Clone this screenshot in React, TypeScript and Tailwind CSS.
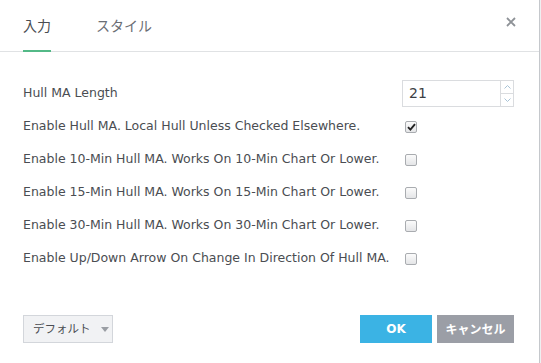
import React, { useState } from 'react';

const ROWS = [
  { label: 'Enable Hull MA. Local Hull Unless Checked Elsewhere.', checked: true },
  { label: 'Enable 10-Min Hull MA. Works On 10-Min Chart Or Lower.', checked: false },
  { label: 'Enable 15-Min Hull MA. Works On 15-Min Chart Or Lower.', checked: false },
  { label: 'Enable 30-Min Hull MA. Works On 30-Min Chart Or Lower.', checked: false },
  { label: 'Enable Up/Down Arrow On Change In Direction Of Hull MA.', checked: false },
];

const Checkbox: React.FC<{ checked: boolean; onChange: () => void }> = ({ checked, onChange }) => (
  <button
    onClick={onChange}
    className="ml-[3px] w-[12px] h-[12px] rounded-[2px] border border-[#a9acb0] bg-gradient-to-b from-[#fbfbfb] to-[#e4e5e7] flex items-center justify-center"
  >
    {checked && (
      <svg width="9" height="8" viewBox="0 0 9 8">
        <path d="M1 4.2 L3.4 6.6 L8 1.2" stroke="#222" strokeWidth="1.9" fill="none" />
      </svg>
    )}
  </button>
);

const App: React.FC = () => {
  const [tab, setTab] = useState(0);
  const [length, setLength] = useState('21');
  const [checks, setChecks] = useState(ROWS.map((r) => r.checked));

  const toggle = (i: number) => setChecks(checks.map((c, j) => (j === i ? !c : c)));

  return (
    <div className="w-[541px] h-[363px] flex bg-white font-['DejaVu_Sans',sans-serif] text-[#4a4d52]">
      <div className="w-[540px] h-full border-r border-[#c5c8cc] flex flex-col">
        <div className="h-[52px] border-b border-[#e0e2e4] flex items-end px-[23px] relative">
          {['入力', 'スタイル'].map((t, i) => (
            <button
              key={t}
              onClick={() => setTab(i)}
              className={`mr-[45px] h-[35px] -mb-px flex items-start text-[14px] leading-[16px] font-['Noto_Sans_CJK_JP',sans-serif] ${
                tab === i ? 'border-b-2 border-[#53b987] text-[#4a4d52]' : 'border-b-2 border-transparent text-[#6a6e74]'
              }`}
            >
              {t}
            </button>
          ))}
          <button className="absolute right-[23px] top-[17px] w-[10px] h-[10px]">
            <svg width="10" height="10" viewBox="0 0 10 10">
              <path d="M1 1 L9 9 M9 1 L1 9" stroke="#8e9297" strokeWidth="1.8" />
            </svg>
          </button>
        </div>

        <div className="pt-[25px] px-[23px] text-[12.5px]">
          <div className="h-[33px] flex items-center">
            <span className="w-[379px]">Hull MA Length</span>
            <div className="w-[112px] h-[27px] border border-[#dadcdf] flex">
              <input
                value={length}
                onChange={(e) => setLength(e.target.value)}
                className="flex-1 min-w-0 pl-[6px] text-[14px] text-[#3c3f44] outline-none"
              />
              <div className="w-[13px] border-l border-[#dadcdf] flex flex-col">
                <div className="flex-1 border-b border-[#dadcdf] flex items-center justify-center">
                  <svg width="7" height="4" viewBox="0 0 7 4">
                    <path d="M0.5 3.5 L3.5 0.5 L6.5 3.5" stroke="#a8c3d6" fill="none" />
                  </svg>
                </div>
                <div className="flex-1 flex items-center justify-center">
                  <svg width="7" height="4" viewBox="0 0 7 4">
                    <path d="M0.5 0.5 L3.5 3.5 L6.5 0.5" stroke="#a8c3d6" fill="none" />
                  </svg>
                </div>
              </div>
            </div>
          </div>
          {ROWS.map((r, i) => (
            <div key={r.label} className="h-[33px] flex items-center">
              <span className="w-[379px]">{r.label}</span>
              <Checkbox checked={checks[i]} onChange={() => toggle(i)} />
            </div>
          ))}
        </div>

        <div className="mt-auto mb-[20px] px-[23px] pr-[25px] flex items-center">
          <button className="w-[90px] h-[28px] border border-[#d3d6db] bg-[#f1f2f4] flex items-center pl-[9px] gap-[10px] whitespace-nowrap text-[11.5px] text-[#4a4d52] font-['Noto_Sans_CJK_JP',sans-serif]">
            デフォルト
            <svg width="8" height="5" viewBox="0 0 8 5">
              <path d="M0 0 L8 0 L4 5 Z" fill="#9a9ea4" />
            </svg>
          </button>
          <div className="ml-auto flex gap-[5px]">
            <button className="w-[72px] h-[28px] bg-[#3bb3e4] text-white text-[12px] font-bold">OK</button>
            <button className="w-[77px] h-[28px] bg-[#9b9ea6] text-white text-[12px] font-bold whitespace-nowrap font-['Noto_Sans_CJK_JP',sans-serif]">
              キャンセル
            </button>
          </div>
        </div>
      </div>
      <div className="w-px h-full bg-[#eef0f1]" />
    </div>
  );
};

export default App;
